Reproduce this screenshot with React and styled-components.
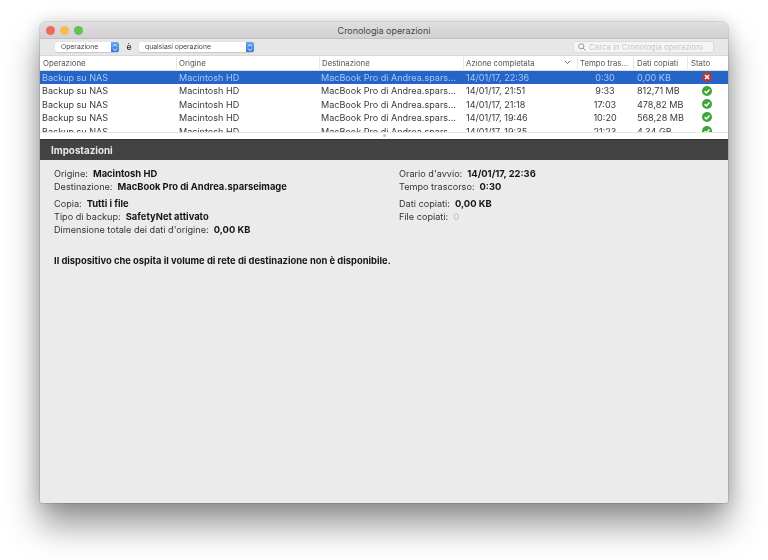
import React from "react";
import styled, { createGlobalStyle } from "styled-components";

const Global = createGlobalStyle`
  html, body { margin: 0; padding: 0; background: #fff; }
  body { width: 768px; height: 560px; overflow: hidden; font-family: Inter, "Liberation Sans", sans-serif; }
`;
const Page = styled.div`
  width: 768px; height: 560px; box-sizing: border-box; padding: 22px 40px 57px;
`;
const Window = styled.div`
  height: 481px; display: flex; flex-direction: column; background: #ebebeb;
  border-radius: 5px 5px 2px 2px; overflow: hidden; filter: blur(0.3px);
  box-shadow: 0 22px 34px rgba(0,0,0,.42), 0 0 18px rgba(0,0,0,.16), 0 0 0 .5px rgba(0,0,0,.2);
`;
const TitleBar = styled.div`
  height: 16px; flex: none; position: relative; display: flex; align-items: center; justify-content: center;
  background: linear-gradient(#e0dee0, #d2d0d2); border-bottom: 1px solid #c2c1c2;
  font-size: 8.95px; color: #454545;
`;
const Lights = styled.div`
  position: absolute; left: 5.5px; top: 3.5px; display: flex; gap: 5px;
`;
const Light = styled.span`
  width: 9px; height: 9px; border-radius: 50%; background: ${p => p.$c};
`;
const Toolbar = styled.div`
  height: 16px; flex: none; display: flex; align-items: center; background: #e8e7e8;
  padding-left: 15px; padding-right: 14px; font-size: 6.8px; color: #333;
`;
const Select = styled.div`
  width: ${p => p.$w}px; height: 10.5px; display: flex; background: #fff; border-radius: 2px; overflow: hidden;
  box-shadow: 0 .5px 1px rgba(0,0,0,.14); color: #444;
`;
const SelectLabel = styled.div`
  flex: 1; padding-left: ${p => p.$pad}px; line-height: 10.5px; white-space: nowrap;
`;
const Stepper = styled.div`
  width: 8px; background: linear-gradient(#6aa5f0, #2f76df); display: flex; align-items: center; justify-content: center;
`;
const Is = styled.span`
  width: 20px; text-align: center; font-size: 8.5px; font-weight: 600; color: #333;
`;
const Search = styled.div`
  margin-left: auto; width: 141px; height: 12px; box-sizing: border-box; background: #f5f5f5; border: 1px solid #dcdcdc; border-radius: 2px;
  display: flex; align-items: center; gap: 3px; padding-left: 4px; color: #c6c6c6; font-size: 7.8px; white-space: nowrap; overflow: hidden;
`;
const Cols = "136px 143px 144px 114px 56px 54px 41px";
const Header = styled.div`
  height: 14.5px; flex: none; display: grid; grid-template-columns: ${Cols}; background: #fff; border-top: .5px solid #d8d8d8;
  box-sizing: border-box; font-size: 7.8px; color: #555;
`;
const HeaderCell = styled.div`
  display: flex; align-items: center; justify-content: space-between; padding: 0 6px 0 ${p => p.$pad}px; border-left: ${p => p.$first ? "none" : "1px solid #e6e6e6"};
  margin: 1px 0; white-space: nowrap; overflow: hidden;
`;
const Table = styled.div`
  height: 62px; flex: none; overflow: hidden; background: #fff; border-top: 1px solid #dcdcdc; box-sizing: border-box;
`;
const Row = styled.div`
  height: 13.4px; display: grid; grid-template-columns: ${Cols}; align-items: center; font-size: 9.05px; line-height: 13.4px;
  background: ${p => p.$sel ? "#2565c8" : "#fff"}; color: ${p => p.$sel ? "#a9c7f2" : "#3a3a3a"};
`;
const Cell = styled.div`
  padding-left: ${p => p.$pad}px; padding-top: 1px; white-space: nowrap; overflow: hidden; text-align: ${p => p.$center ? "center" : "left"};
`;
const StatusCell = styled.div`
  display: flex; justify-content: center; padding-right: 1px;
`;
const Splitter = styled.div`
  height: 7.5px; flex: none; background: #fff; border-top: 1px solid #e4e4e4; box-sizing: border-box; display: flex; justify-content: center;
`;
const Dot = styled.span`
  width: 3px; height: 3px; margin-top: 1px; border-radius: 50%; background: #c2c2c2;
`;
const SectionBar = styled.div`
  height: 21px; flex: none; display: flex; align-items: center; padding-left: 11px; background: #434343; border-top: 1px solid #333;
  box-sizing: border-box; color: #e8e8e8; font-size: 9.8px; font-weight: 700;
`;
const Details = styled.div`
  flex: 1; padding: 7px 14px 0; font-size: 9.15px; color: #333;
`;
const TwoCols = styled.div`
  display: grid; grid-template-columns: 345px 1fr;
`;
const Group = styled.div`
  margin-bottom: 4px;
`;
const Line = styled.div`
  height: 13px; line-height: 13px; white-space: nowrap;
`;
const Val = styled.b`
  font-size: 9.4px; font-weight: ${p => p.$dim ? 400 : 700}; color: ${p => p.$dim ? "#bdbdbd" : "#151515"}; margin-left: 5px;
`;
const Message = styled.div`
  margin-top: 14px; font-size: 9.4px; font-weight: 700; color: #151515; line-height: 13px; white-space: nowrap;
`;

const Arrows = () => (
  <svg width="6" height="9" viewBox="0 0 6 9"><path d="M1 3.4 3 1.4l2 2M1 5.6l2 2 2-2" fill="none" stroke="#fff" strokeWidth="1" /></svg>
);
const Ok = () => (
  <svg width="10" height="10" viewBox="0 0 10 10"><circle cx="5" cy="5" r="5" fill="#3da53c" /><path d="M2.6 5.1 4.4 6.9 7.5 3.5" fill="none" stroke="#fff" strokeWidth="1.5" /></svg>
);
const Fail = () => (
  <svg width="10" height="10" viewBox="0 0 10 10"><circle cx="5" cy="5" r="5" fill="#b23a3f" /><path d="M3 3l4 4M7 3 3 7" stroke="#fff" strokeWidth="1.5" /></svg>
);

const rows = [
  ["14/01/17, 22:36", "0:30", "0,00 KB", false],
  ["14/01/17, 21:51", "9:33", "812,71 MB", true],
  ["14/01/17, 21:18", "17:03", "478,82 MB", true],
  ["14/01/17, 19:46", "10:20", "568,28 MB", true],
  ["14/01/17, 19:35", "21:23", "4,34 GB", true],
];

export default function App() {
  return (
    <Page>
      <Global />
      <Window>
        <TitleBar>
          <Lights>
            <Light $c="#ee6a5f" /><Light $c="#f5bd4f" /><Light $c="#61c354" />
          </Lights>
          Cronologia operazioni
        </TitleBar>
        <Toolbar>
          <Select $w={64}><SelectLabel $pad={6}>Operazione</SelectLabel><Stepper><Arrows /></Stepper></Select>
          <Is>è</Is>
          <Select $w={115}><SelectLabel $pad={6}>qualsiasi operazione</SelectLabel><Stepper><Arrows /></Stepper></Select>
          <Search>
            <svg width="8" height="8" viewBox="0 0 9 9"><circle cx="3.7" cy="3.7" r="2.9" fill="none" stroke="#8c8c8c" /><path d="M5.8 5.8 8.5 8.5" stroke="#8c8c8c" strokeWidth="1.1" /></svg>
            Cerca in Cronologia operazioni
          </Search>
        </Toolbar>
        <Header>
          <HeaderCell $first $pad={3}>Operazione</HeaderCell>
          <HeaderCell $pad={2}>Origine</HeaderCell>
          <HeaderCell $pad={2}>Destinazione</HeaderCell>
          <HeaderCell $pad={2}>Azione completata
            <svg width="7" height="5" viewBox="0 0 7 5"><path d="M1 1l2.5 2.5L6 1" fill="none" stroke="#666" /></svg>
          </HeaderCell>
          <HeaderCell $pad={2}>Tempo tras...</HeaderCell>
          <HeaderCell $pad={3}>Dati copiati</HeaderCell>
          <HeaderCell $pad={3}>Stato</HeaderCell>
        </Header>
        <Table>
          {rows.map((r, i) => (
            <Row key={i} $sel={i === 0}>
              <Cell $pad={2}>Backup su NAS</Cell>
              <Cell $pad={3}>Macintosh HD</Cell>
              <Cell $pad={2}>MacBook Pro di Andrea.spars...</Cell>
              <Cell $pad={3}>{r[0]}</Cell>
              <Cell $center>{r[1]}</Cell>
              <Cell $pad={4}>{r[2]}</Cell>
              <StatusCell>{r[3] ? <Ok /> : <Fail />}</StatusCell>
            </Row>
          ))}
        </Table>
        <Splitter><Dot /></Splitter>
        <SectionBar>Impostazioni</SectionBar>
        <Details>
          <TwoCols>
            <div>
              <Group>
                <Line>Origine:<Val>Macintosh HD</Val></Line>
                <Line>Destinazione:<Val>MacBook Pro di Andrea.sparseimage</Val></Line>
              </Group>
              <Group>
                <Line>Copia:<Val>Tutti i file</Val></Line>
                <Line>Tipo di backup:<Val>SafetyNet attivato</Val></Line>
                <Line>Dimensione totale dei dati d'origine:<Val>0,00 KB</Val></Line>
              </Group>
            </div>
            <div>
              <Group>
                <Line>Orario d'avvio:<Val>14/01/17, 22:36</Val></Line>
                <Line>Tempo trascorso:<Val>0:30</Val></Line>
              </Group>
              <Group>
                <Line>Dati copiati:<Val>0,00 KB</Val></Line>
                <Line>File copiati:<Val $dim>0</Val></Line>
              </Group>
            </div>
          </TwoCols>
          <Message>Il dispositivo che ospita il volume di rete di destinazione non è disponibile.</Message>
        </Details>
      </Window>
    </Page>
  );
}
